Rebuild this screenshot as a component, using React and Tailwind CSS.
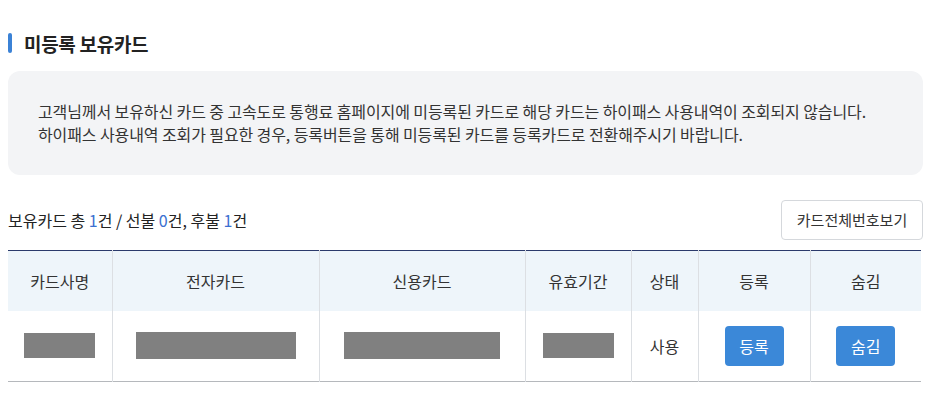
import React from 'react';

const font = { fontFamily: '"Noto Sans CJK KR", "Noto Sans", sans-serif' };

function Masked({ w, h }) {
  return <div className={`mx-auto bg-[#808080] ${w} ${h}`} />;
}

export default function App() {
  return (
    <div className="w-[931px] h-[419px] bg-white px-2 pt-[30px] text-[#222]" style={font}>
      {/* Section title */}
      <div className="flex items-center gap-3 h-[26px]">
        <span className="w-1 h-[20px] rounded-full bg-[#3b82d6]" />
        <h2 className="text-[19px] font-bold tracking-[-0.3px] leading-none">미등록 보유카드</h2>
      </div>

      {/* Notice */}
      <div className="mt-[15px] h-[104px] rounded-xl bg-[#f3f4f6] px-[30px] pt-[29px] text-[16px] leading-[23px] tracking-[-0.1px] text-[#333]">
        <p>고객님께서 보유하신 카드 중 고속도로 통행료 홈페이지에 미등록된 카드로 해당 카드는 하이패스 사용내역이 조회되지 않습니다.</p>
        <p>하이패스 사용내역 조회가 필요한 경우, 등록버튼을 통해 미등록된 카드를 등록카드로 전환해주시기 바랍니다.</p>
      </div>

      {/* Summary */}
      <div className="mt-[25px] flex items-center justify-between">
        <p className="text-[16px] tracking-[0px] text-[#222]">
          보유카드 총 <span className="text-[#3b6fd0]">1</span>건 / 선불 <span className="text-[#3b6fd0]">0</span>건, 후불 <span className="text-[#3b6fd0]">1</span>건
        </p>
        <button className="h-[40px] w-[142px] rounded border border-[#d5d8dc] bg-white text-[15px] text-[#333]">
          카드전체번호보기
        </button>
      </div>

      {/* Table */}
      <table className="mt-[10px] w-[913px] table-fixed border-collapse border-t border-t-[#2b3a6b] text-[16px] text-[#333]">
        <colgroup>
          <col className="w-[104px]" />
          <col className="w-[207px]" />
          <col className="w-[206px]" />
          <col className="w-[106px]" />
          <col className="w-[67px]" />
          <col className="w-[112px]" />
          <col className="w-[111px]" />
        </colgroup>
        <thead>
          <tr className="h-[60px] bg-[#eef5fa]">
            {['카드사명', '전자카드', '신용카드', '유효기간', '상태', '등록', '숨김'].map((t, i) => (
              <th key={t} className={`font-normal ${i > 0 ? 'border-l border-l-[#dcdfe3]' : ''}`}>{t}</th>
            ))}
          </tr>
        </thead>
        <tbody>
          <tr className="h-[71px] border-b border-b-[#b5b8bc] text-center">
            <td><Masked w="w-[71px]" h="h-[25px]" /></td>
            <td className="border-l border-l-[#dcdfe3]"><Masked w="w-[160px]" h="h-[27px]" /></td>
            <td className="border-l border-l-[#dcdfe3]"><Masked w="w-[156px]" h="h-[27px]" /></td>
            <td className="border-l border-l-[#dcdfe3]"><Masked w="w-[71px]" h="h-[25px]" /></td>
            <td className="border-l border-l-[#dcdfe3]">사용</td>
            <td className="border-l border-l-[#dcdfe3]">
              <button className="h-[40px] w-[59px] rounded bg-[#3b88d8] text-[16px] text-white">등록</button>
            </td>
            <td className="border-l border-l-[#dcdfe3]">
              <button className="h-[40px] w-[59px] rounded bg-[#3b88d8] text-[16px] text-white">숨김</button>
            </td>
          </tr>
        </tbody>
      </table>
    </div>
  );
}
